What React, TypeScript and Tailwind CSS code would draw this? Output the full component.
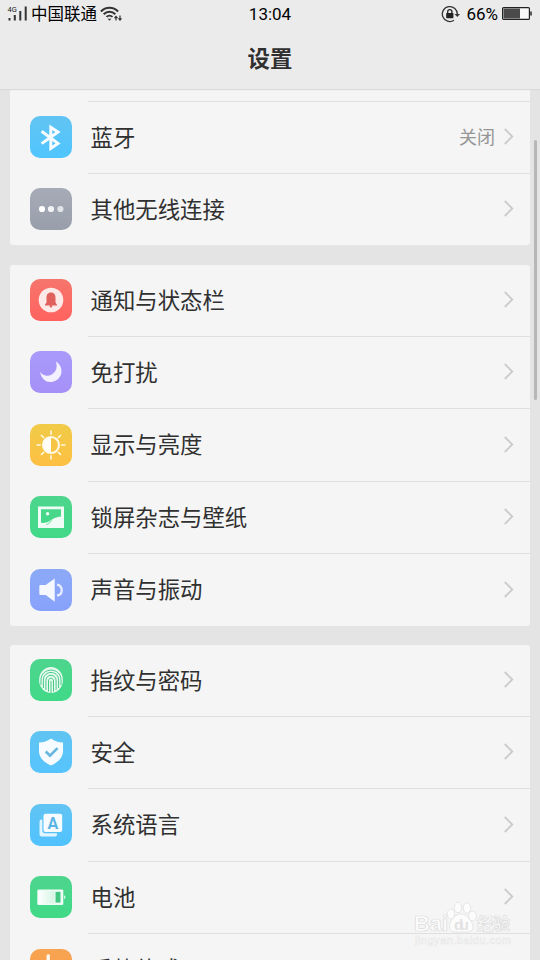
import type { ReactNode } from "react";

const Bluetooth = () => (
  <svg viewBox="0 0 42 42" className="size-full">
    <path d="M11.6 15.2 28 27.4 20.8 32.4V11.2L28 16 11.6 27.6" fill="none" stroke="#f6fcff" strokeWidth="3" />
  </svg>
);

const Dots = () => (
  <svg viewBox="0 0 42 42" className="size-full">
    <circle cx="12" cy="21" r="3.1" fill="#fff" />
    <circle cx="21" cy="21" r="3.1" fill="#f2f3f4" />
    <circle cx="30.4" cy="21" r="3.1" fill="#e0e3e7" />
  </svg>
);

const Bell = () => (
  <svg viewBox="0 0 42 42" className="size-full">
    <circle cx="21" cy="21" r="12.3" fill="#fdeae8" />
    <path d="M21 13.5c-3.3 0-4.5 2.3-4.5 5.2v4.8l-1.5 2.2v.7h12v-.7l-1.5-2.2v-4.8c0-2.9-1.2-5.2-4.500-5.2Z" fill="#e0605c" />
    <circle cx="21" cy="27.3" r="1.200" fill="#e0605c" />
  </svg>
);

const Moon = () => (
  <svg viewBox="0 0 42 42" className="size-full">
    <path d="M25.8 10.500c8.800 5.200 7.300 18-3.300 20.300-5.700 1.300-10.900-2-12.500-10 2.700 4 7.800 4.900 11.700 2.700 4.800-2.800 6-7.800 4.100-13Z" fill="#f3f0ff" />
  </svg>
);

const Sun = () => (
  <svg viewBox="0 0 42 42" className="size-full">
    <g stroke="#fff8e2" strokeWidth="1.6">
      <path d="M21 6.500v4.300M21 31.200v4.300M6.500 21h4.300M31.200 21h4.300M11 11l3 3M28 28l3 3M11 31l3-3M28 14l3-3" />
      <circle cx="21" cy="21" r="8" fill="none" strokeWidth="2.200" />
    </g>
    <path d="M21 13a8 8 0 0 0 0 16Z" fill="#fffdf5" />
  </svg>
);

const Picture = () => (
  <svg viewBox="0 0 42 42" className="size-full">
    <path fillRule="evenodd" d="M8 10.500h26v21.500H8ZM11 13.300v13.500c3 .3 5.600 0 8.300-1.500 3.200-1.800 5.700-4.300 11.700-4.700v-7.300Z" fill="#effcf5" />
    <path d="M16.400 28.500c2.400-.3 4.100-2.400 5.100-4.200" fill="none" stroke="#43d68a" strokeWidth=".8" />
    <circle cx="17.600" cy="17.800" r="1.700" fill="#effcf5" />
  </svg>
);

const Speaker = () => (
  <svg viewBox="0 0 42 42" className="size-full">
    <path d="M9.300 17.200c0-.7.500-1.200 1.200-1.200h5.200l9-6.500v23.200l-9-6.700h-5.200c-.7 0-1.200-.5-1.200-1.200Z" fill="#f5f8ff" />
    <path d="M27 15.700c6.300 1.200 6.300 9.800 0 11" fill="none" stroke="#e6ecff" strokeWidth="2.300" />
  </svg>
);

const Fingerprint = () => (
  <svg viewBox="0 0 42 42" className="size-full">
    <ellipse cx="21" cy="21" rx="11.900" ry="13" fill="#e8faf0" />
    <g fill="none" stroke="#44c985" strokeWidth="1">
      <path d="M11 26v-5c0-13.200 20-13.200 20 0v5" />
      <path d="M13.400 29v-7.800c0-10.300 15.200-10.300 15.200 0V29" />
      <path d="M15.900 31v-9.300c0-7.200 10.200-7.200 10.200 0V31" />
      <path d="M18.500 32.500V22c0-3.700 5-3.700 5 0v10.500M21 22v12" />
    </g>
  </svg>
);

const Shield = () => (
  <svg viewBox="0 0 42 42" className="size-full">
    <path d="M21 7.500c3.700 2.800 7.600 4 12 4.100v8.600c0 6.300-5 11-12 14.400C14 31.200 9 26.500 9 20.200v-8.600c4.400-.1 8.300-1.300 12-4.100Z" fill="#f5fbff" />
    <path d="m15.800 20.500 4.200 4.200 7.500-7.500" fill="none" stroke="#66b6df" strokeWidth="2.600" />
  </svg>
);

const Language = () => (
  <svg viewBox="0 0 42 42" className="size-full">
    <path d="M12.300 15.500h-.8a2 2 0 0 0-2 2v13a2 2 0 0 0 2 2H25a2 2 0 0 0 2-2v-1.300H15.300a3 3 0 0 1-3-3Z" fill="#e2f4fd" />
    <rect x="13.500" y="9.800" width="18.700" height="18.200" rx="2" fill="#f5fbff" />
    <text x="22.900" y="24.500" textAnchor="middle" fontSize="16" fontWeight="700" fill="#5bb4e3" fontFamily="Roboto, sans-serif">A</text>
  </svg>
);

const Battery = () => (
  <svg viewBox="0 0 42 42" className="size-full">
    <defs>
      <linearGradient id="cell">
        <stop offset="0" stopColor="#fff" />
        <stop offset="1" stopColor="#d5f5e3" />
      </linearGradient>
    </defs>
    <rect x="7.300" y="13.600" width="26" height="15.400" rx="1.200" fill="#effcf5" />
    <rect x="8.500" y="15" width="16" height="12.600" fill="url(#cell)" />
    <rect x="25.500" y="15.800" width="5" height="10.800" fill="#43c884" />
    <path d="M34.200 19.300c1.600.6 1.600 3.400 0 4Z" fill="#effcf5" />
  </svg>
);

const Gesture = () => (
  <svg viewBox="0 0 42 42" className="size-full">
    <path d="M16.500 42V7c0-2.400 3.500-2.400 3.500 0v35" fill="#fff5ea" />
  </svg>
);

const Chevron = () => (
  <svg viewBox="0 0 10 17" className="-mt-0.5 h-[17px] w-2.5 shrink-0">
    <path d="m.8 1 7.400 7.500L.8 16" fill="none" stroke="#cbcbcb" strokeWidth="1.900" />
  </svg>
);

type Item = { label: string; icon: ReactNode; bg: string; value?: string };

const connections: Item[] = [
  { label: "蓝牙", icon: <Bluetooth />, bg: "from-[#61c4f2] to-[#4fc5ff]", value: "关闭" },
  { label: "其他无线连接", icon: <Dots />, bg: "from-[#a6abb7] to-[#989faa]" },
];

const display: Item[] = [
  { label: "通知与状态栏", icon: <Bell />, bg: "from-[#f6756c] to-[#ff625f]" },
  { label: "免打扰", icon: <Moon />, bg: "from-[#a99afa] to-[#a590f8]" },
  { label: "显示与亮度", icon: <Sun />, bg: "from-[#f0cb48] to-[#fdbf42]" },
  { label: "锁屏杂志与壁纸", icon: <Picture />, bg: "from-[#4dd58d] to-[#40d988]" },
  { label: "声音与振动", icon: <Speaker />, bg: "from-[#8ca9f6] to-[#88a2fc]" },
];

const system: Item[] = [
  { label: "指纹与密码", icon: <Fingerprint />, bg: "from-[#4dd58d] to-[#40d988]" },
  { label: "安全", icon: <Shield />, bg: "from-[#61c4f2] to-[#56c4fd]" },
  { label: "系统语言", icon: <Language />, bg: "from-[#61c4f2] to-[#50c2ff]" },
  { label: "电池", icon: <Battery />, bg: "from-[#4dd58d] to-[#40d988]" },
  { label: "手势体感", icon: <Gesture />, bg: "from-[#f6a452] to-[#ff9c46]" },
];

function Row({ item, last }: { item: Item; last: boolean }) {
  return (
    <div className="flex h-[72.4px] shrink-0 items-start pl-5">
      <div className={`mt-3.5 size-[42px] shrink-0 overflow-hidden rounded-[10px] bg-linear-to-b ${item.bg}`}>
        {item.icon}
      </div>
      <div className={`ml-4 flex h-[72px] flex-1 items-center border-b pr-4 pl-[2.5px] ${last ? "border-transparent" : "border-[#dfdfdf]"}`}>
        <span className="flex-1 text-[22.4px] leading-[70px] text-[#303030]">{item.label}</span>
        {item.value && <span className="mr-[9px] text-[18px] text-[#969696]">{item.value}</span>}
        <Chevron />
      </div>
    </div>
  );
}

function Group({ items }: { items: Item[] }) {
  return items.map((item, i) => <Row key={item.label} item={item} last={i === items.length - 1} />);
}

function StatusBar() {
  return (
    <div className="grid h-7 grid-cols-3 items-center text-black">
      <div className="flex items-center pl-[7px]">
        <svg viewBox="0 0 22 18" className="h-[18px] w-[22px]">
          <text x="0.5" y="7" fontSize="7.500" fontFamily="Roboto, sans-serif" fill="#222">4G</text>
          <path d="M2.500 13v2.500M7.800 10v5.500M13.300 6v9.500M18.700 1.500v14" stroke="#333" strokeWidth="2" />
        </svg>
        <span className="mt-0.5 ml-0.5 text-[16.5px] leading-none whitespace-nowrap">中国联通</span>
        <svg viewBox="0 0 24 18" className="ml-[3px] h-[18px] w-6">
          <g fill="none" stroke="#333" strokeWidth="2">
            <path d="M.9 6.500c4.800-5 12.400-5 17.200 0" />
            <path d="M3.700 9.200c3.200-3.400 8.400-3.400 11.600 0" />
            <path d="M6.500 11.900c1.700-1.700 4.300-1.700 6 0" />
          </g>
          <path d="m9.500 15.700-1.800-2h3.600Z" fill="#333" />
          <path d="M16 15.500v-4m-1.500 1.700 1.500-1.700 1.500 1.700M20 10.500v4.500m-1.500-1.700 1.500 1.700 1.500-1.700" fill="none" stroke="#333" strokeWidth="1.200" />
        </svg>
      </div>
      <span className="text-center text-[17px] leading-none">13:04</span>
      <div className="flex items-center justify-end pr-2">
        <svg viewBox="0 0 20 18" className="-mt-px mr-[5px] h-[18px] w-5">
          <path d="M13 15.300A7.500 7.500 0 1 1 16.300 9.500" fill="none" stroke="#333" strokeWidth="1.300" />
          <path d="M13.500 9h5.500l-2.700 3Z" fill="#333" />
          <rect x="5.200" y="8" width="7.200" height="5.200" rx=".6" fill="#222" />
          <path d="M6.700 8.500V6.800c0-2.800 4.200-2.800 4.200 0v1.700" fill="none" stroke="#222" strokeWidth="1.300" />
        </svg>
        <span className="text-[17px] leading-none">66%</span>
        <svg viewBox="0 0 30 13" className="-mt-px ml-1 h-[13px] w-[30px]">
          <rect x=".6" y=".6" width="26.800" height="11.800" rx="1" fill="#f8f8f8" stroke="#222" strokeWidth="1.200" />
          <rect x="1.500" y="1.500" width="16.500" height="10" fill="#4a4a4a" />
          <path d="M29 4.500v4" stroke="#333" strokeWidth="1.600" />
        </svg>
      </div>
    </div>
  );
}

function Watermark() {
  return (
    <div className="absolute top-[900px] left-[413px] h-12 w-[100px]">
      <svg viewBox="0 0 100 48" className="size-full" fill="#fcfcfc" stroke="#dcdcdc" strokeWidth=".7">
        <text x="1" y="31" fontSize="22" fontWeight="700" fontFamily="Liberation Sans, sans-serif" textLength="34">Bai</text>
        <ellipse cx="38" cy="14" rx="3.700" ry="4.900" />
        <ellipse cx="45" cy="7.500" rx="3.700" ry="5.200" />
        <ellipse cx="54" cy="8" rx="3.700" ry="5.200" />
        <ellipse cx="59.500" cy="16" rx="3.900" ry="4.900" />
        <path d="M48 14c-7 0-11.500 8-11.500 12.500 0 5 4 5.500 7 5.500h10c4 0 6.500-1.500 6.500-5C60 22 54 14 48 14Z" />
        <text x="41" y="30" fontSize="15" fontWeight="700" fontFamily="Liberation Sans, sans-serif" textLength="15" fill="#e3e3e3" stroke="none">du</text>
        <text x="64" y="30" fontSize="16.500" fontWeight="700" fontFamily="Noto Sans CJK SC, sans-serif">经验</text>
        <text x="2" y="44" fontSize="10.500" fontFamily="Liberation Sans, sans-serif" textLength="96" stroke="#e8e8e8" strokeWidth=".6">jingyan.baidu.com</text>
      </svg>
    </div>
  );
}

export default function App() {
  return (
    <div className="relative flex h-[960px] w-[540px] flex-col overflow-hidden bg-[#e4e4e4] font-[Roboto,'Noto_Sans_CJK_SC',sans-serif]">
      <header className="z-10 h-[89px] shrink-0 bg-[#ebebeb] shadow-[0_1px_1px_#d9d9d9]">
        <StatusBar />
        <h1 className="text-center text-[22.4px] leading-[63px] font-bold text-[#303030]">设置</h1>
      </header>

      <main className="flex flex-1 flex-col overflow-hidden px-2.5">
        {/* group already scrolled partly under the header */}
        <section className="h-[156px] shrink-0 overflow-hidden rounded-b-[3px] bg-[#f5f5f5]">
          <div className="ml-[78px] h-[13px] border-b border-[#dfdfdf]" />
          <Group items={connections} />
        </section>
        <section className="mt-5 h-[361px] shrink-0 overflow-hidden rounded-[3px] bg-[#f5f5f5]">
          <Group items={display} />
        </section>
        <section className="mt-[19px] shrink-0 rounded-t-[3px] bg-[#f5f5f5]">
          <Group items={system} />
        </section>
      </main>

      <div className="absolute top-[140px] right-[3px] h-[260px] w-[3px] rounded-full bg-[#b7b7b7]" />
      <Watermark />
    </div>
  );
}
